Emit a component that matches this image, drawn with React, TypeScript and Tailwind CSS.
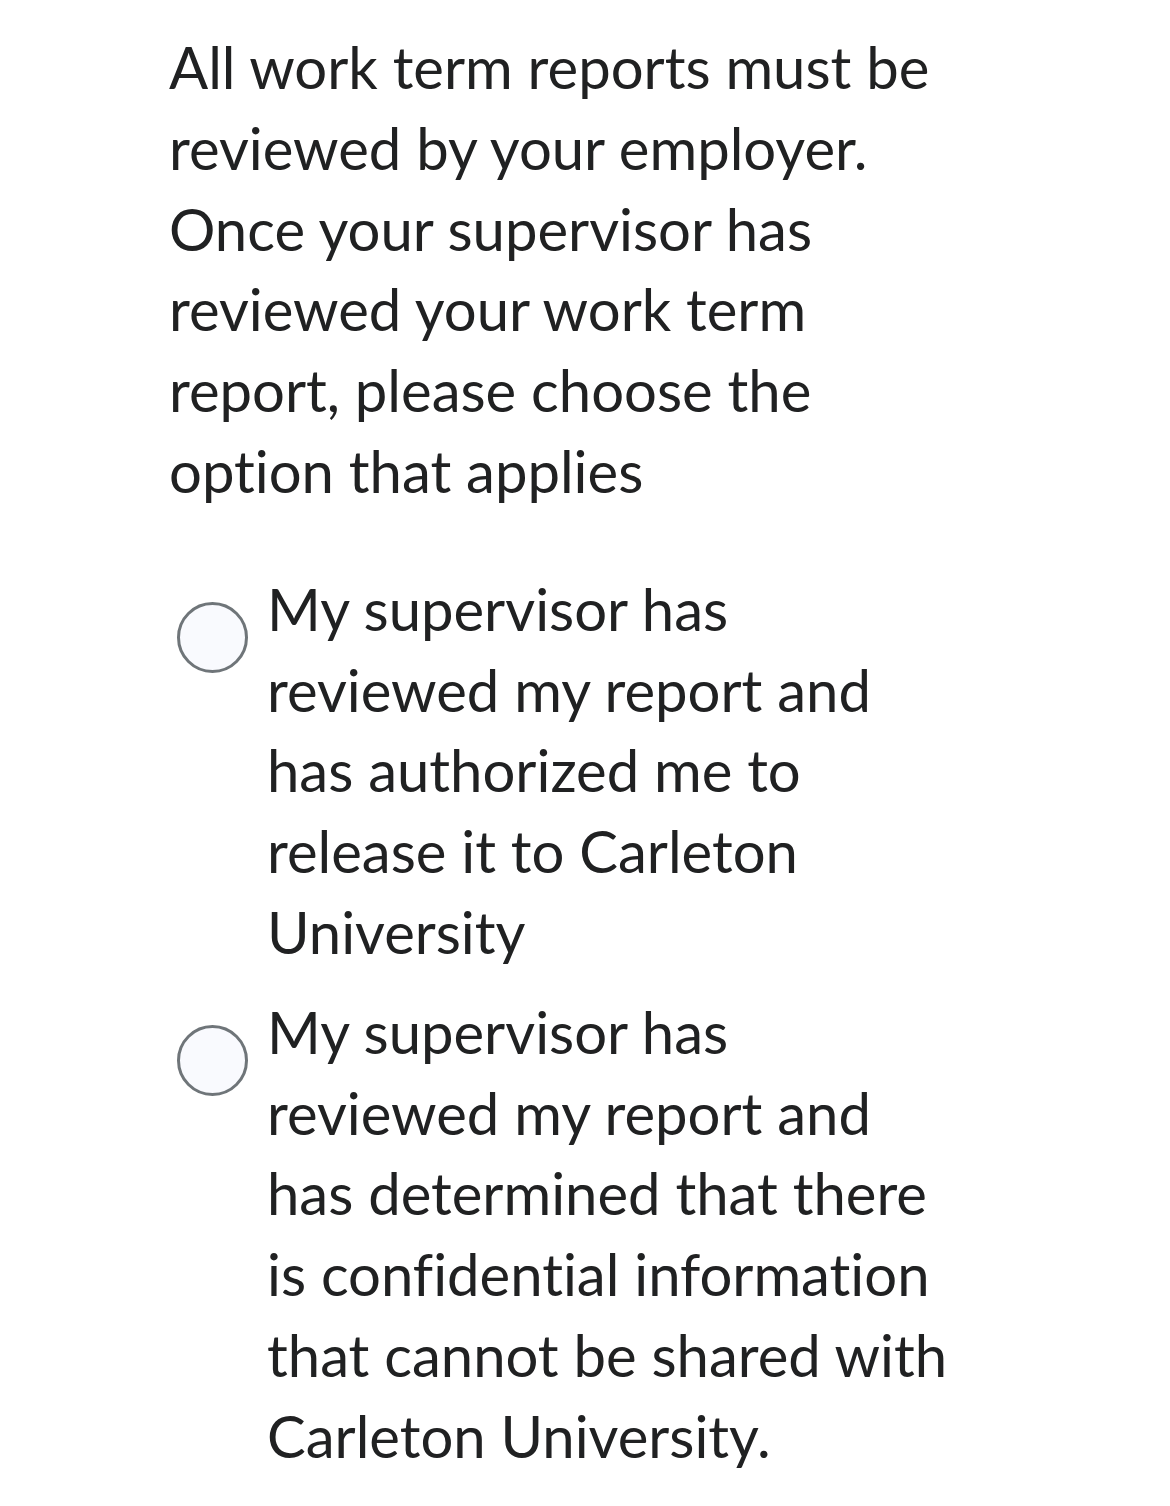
const options = [
  "My supervisor has reviewed my report and has authorized me to release it to Carleton University",
  "My supervisor has reviewed my report and has determined that there is confidential information that cannot be shared with Carleton University.",
];

export default function App() {
  return (
    <div className="min-h-[1506px] w-[1170px] bg-white font-['Lato','Noto_Sans',sans-serif] text-[#202122] [font-variant-ligatures:none]">
      <div className="ml-[169px] w-[800px] pt-[27px]">
        {/* Question */}
        <p className="text-[58px] leading-[80.8px]">
          All work term reports must be reviewed by your employer. Once your supervisor has reviewed your work term report, please choose the option that applies
        </p>

        {/* Options */}
        <div className="mt-[57px] flex flex-col gap-[19px]">
          {options.map((option, index) => (
            <label key={index} className="flex items-start gap-[19px]">
              <span className="ml-[8px] mt-[33px] h-[71px] w-[71px] flex-shrink-0 rounded-full border-[3px] border-[#6f7579] bg-[#f9fafe]" />
              <span className="w-[705px] text-[58px] leading-[80.8px]">{option}</span>
            </label>
          ))}
        </div>
      </div>
    </div>
  );
}
